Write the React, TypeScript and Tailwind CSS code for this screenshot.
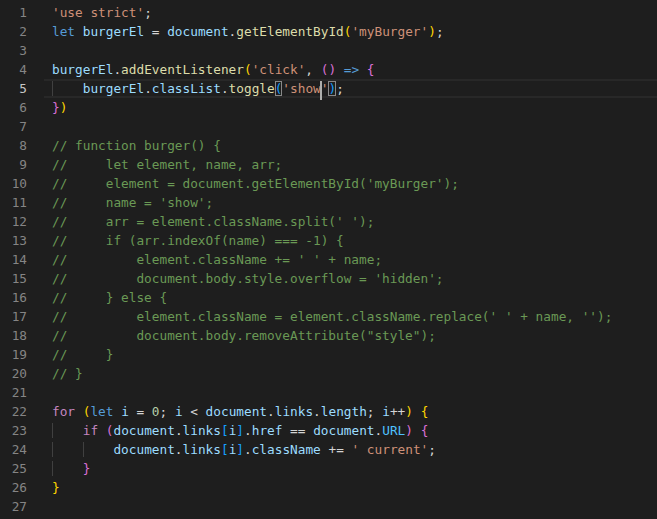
import React from "react";

type Tok = [string, string];

const S = "text-[#ce9178]";
const K = "text-[#569cd6]";
const V = "text-[#9cdcfe]";
const F = "text-[#dcdcaa]";
const P = "text-[#d4d4d4]";
const CM = "text-[#6a9955]";
const N = "text-[#b5cea8]";
const CT = "text-[#c586c0]";
const G = "text-[#ffd700]";
const M = "text-[#da70d6]";
const B = "text-[#179fff]";
const U = "text-[#4fc1ff]";

type Line = { indent: number; toks: Tok[]; special?: boolean };

const comment = (t: string): Line => ({ indent: 0, toks: [[t, CM]] });

const lines: Line[] = [
  { indent: 0, toks: [["'use strict'", S], [";", P]] },
  {
    indent: 0,
    toks: [
      ["let", K], [" ", P], ["burgerEl", V], [" = ", P], ["document", V], [".", P],
      ["getElementById", F], ["(", G], ["'myBurger'", S], [")", G], [";", P],
    ],
  },
  { indent: 0, toks: [] },
  {
    indent: 0,
    toks: [
      ["burgerEl", V], [".", P], ["addEventListener", F], ["(", G], ["'click'", S], [", ", P],
      ["()", M], [" ", P], ["=>", K], [" ", P], ["{", M],
    ],
  },
  { indent: 1, toks: [], special: true },
  { indent: 0, toks: [["}", M], [")", G]] },
  { indent: 0, toks: [] },
  comment("// function burger() {"),
  comment("//     let element, name, arr;"),
  comment("//     element = document.getElementById('myBurger');"),
  comment("//     name = 'show';"),
  comment("//     arr = element.className.split(' ');"),
  comment("//     if (arr.indexOf(name) === -1) {"),
  comment("//         element.className += ' ' + name;"),
  comment("//         document.body.style.overflow = 'hidden';"),
  comment("//     } else {"),
  comment("//         element.className = element.className.replace(' ' + name, '');"),
  comment('//         document.body.removeAttribute("style");'),
  comment("//     }"),
  comment("// }"),
  { indent: 0, toks: [] },
  {
    indent: 0,
    toks: [
      ["for", CT], [" ", P], ["(", G], ["let", K], [" ", P], ["i", V], [" = ", P], ["0", N], ["; ", P],
      ["i", V], [" < ", P], ["document", V], [".", P], ["links", V], [".", P], ["length", V], ["; ", P],
      ["i", V], ["++", P], [")", G], [" ", P], ["{", G],
    ],
  },
  {
    indent: 1,
    toks: [
      ["if", CT], [" ", P], ["(", M], ["document", V], [".", P], ["links", V], ["[", B], ["i", V], ["]", B],
      [".", P], ["href", V], [" == ", P], ["document", V], [".", P], ["URL", U], [")", M], [" ", P], ["{", M],
    ],
  },
  {
    indent: 2,
    toks: [
      ["document", V], [".", P], ["links", V], ["[", B], ["i", V], ["]", B], [".", P], ["className", V],
      [" += ", P], ["' current'", S], [";", P],
    ],
  },
  { indent: 1, toks: [["}", M]] },
  { indent: 0, toks: [["}", G]] },
  { indent: 0, toks: [] },
];

function Indent({ n }: { n: number }) {
  const arr = [];
  for (let i = 0; i < n; i++) {
    arr.push(
      <span key={i} className="shadow-[inset_1px_0_0_#404040]">
        {"    "}
      </span>
    );
  }
  return <>{arr}</>;
}

function SpecialLine() {
  return (
    <>
      <span className={V}>burgerEl</span>
      <span className={P}>.</span>
      <span className={V}>classList</span>
      <span className={P}>.</span>
      <span className={F}>toggle</span>
      <span className={`${B} outline outline-[#888888] -outline-offset-1`}>(</span>
      <span className={S}>'show</span>
      <span className="relative">
        <span className="absolute left-[-1px] top-0 h-[19px] w-[2px] bg-[#aeafad]" />
      </span>
      <span className={S}>'</span>
      <span className={`${B} outline outline-[#888888] -outline-offset-1`}>)</span>
      <span className={P}>;</span>
    </>
  );
}

export default function App() {
  return (
    <div
      className="min-h-screen w-full bg-[#1e1e1e] pt-[3px] text-[12.75px] leading-[19px] text-[#d4d4d4]"
      style={{ fontFamily: '"DejaVu Sans Mono", "Liberation Mono", monospace' }}
    >
      {lines.map((ln, idx) => {
        const num = idx + 1;
        const active = num === 5;
        return (
          <div key={idx} className="flex h-[19px]">
            <div
              className={`w-[27px] shrink-0 text-right ${active ? "text-[#c6c6c6]" : "text-[#858585]"}`}
            >
              {num}
            </div>
            <div
              className={`ml-[17px] flex-1 whitespace-pre pl-[8px] ${
                active ? "shadow-[inset_0_2px_0_#282828,inset_0_-2px_0_#282828]" : ""
              }`}
            >
              <Indent n={ln.indent} />
              {ln.special ? (
                <SpecialLine />
              ) : (
                ln.toks.map((t, i) => (
                  <span key={i} className={t[1]}>
                    {t[0]}
                  </span>
                ))
              )}
            </div>
          </div>
        );
      })}
    </div>
  );
}
